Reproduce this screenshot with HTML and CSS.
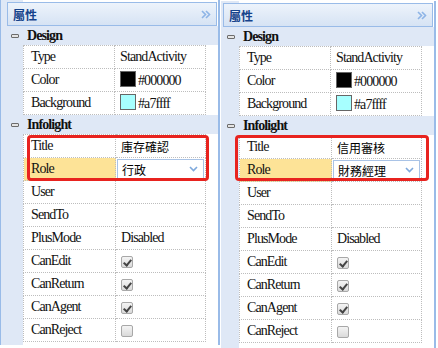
FILE: index.html
```html
<!DOCTYPE html>
<html lang="zh-Hant">
<head>
    <meta charset="UTF-8">
    <meta name="viewport" content="width=device-width, initial-scale=1.0">
    <title>屬性</title>
    <link rel="stylesheet" href="styles.css">
</head>
<body>
    <div class="wrap">
        <section class="panel">
            <div class="panel-head">
                <span class="panel-title">屬性</span>
                <svg class="collapse" width="10" height="9" viewBox="0 0 10 9"><path d="M1 1l3.5 3.5L1 8M5 1l3.5 3.5L5 8" fill="none" stroke="#8db4e6" stroke-width="1.6"/></svg>
            </div>
            <div class="group"><i class="toggle"></i>Design</div>
            <table class="props">
                <tr><td class="key">Type</td><td>StandActivity</td></tr>
                <tr><td class="key">Color</td><td><span class="swatch" style="background:#000000"></span>#000000</td></tr>
                <tr><td class="key">Background</td><td><span class="swatch" style="background:#a7ffff"></span>#a7ffff</td></tr>
            </table>
            <div class="group"><i class="toggle"></i>Infolight</div>
            <table class="props">
                <tr><td class="key">Title</td><td class="cjk">庫存確認</td></tr>
                <tr class="selected"><td class="key">Role</td><td><div class="combo"><span class="cjk">行政</span><svg width="9" height="6" viewBox="0 0 9 6"><path d="M1 1l3.5 3.5L8 1" fill="none" stroke="#7fa9dc" stroke-width="1.6"/></svg></div></td></tr>
                <tr><td class="key">User</td><td></td></tr>
                <tr><td class="key">SendTo</td><td></td></tr>
                <tr><td class="key">PlusMode</td><td>Disabled</td></tr>
                <tr><td class="key">CanEdit</td><td><span class="check on"></span></td></tr>
                <tr><td class="key">CanReturn</td><td><span class="check on"></span></td></tr>
                <tr><td class="key">CanAgent</td><td><span class="check on"></span></td></tr>
                <tr><td class="key">CanReject</td><td><span class="check"></span></td></tr>
            </table>
            <div class="mark"></div>
        </section>

        <section class="panel panel-right">
            <div class="panel-head">
                <span class="panel-title">屬性</span>
                <svg class="collapse" width="10" height="9" viewBox="0 0 10 9"><path d="M1 1l3.5 3.5L1 8M5 1l3.5 3.5L5 8" fill="none" stroke="#8db4e6" stroke-width="1.6"/></svg>
            </div>
            <div class="group"><i class="toggle"></i>Design</div>
            <table class="props">
                <tr><td class="key">Type</td><td>StandActivity</td></tr>
                <tr><td class="key">Color</td><td><span class="swatch" style="background:#000000"></span>#000000</td></tr>
                <tr><td class="key">Background</td><td><span class="swatch" style="background:#a7ffff"></span>#a7ffff</td></tr>
            </table>
            <div class="group"><i class="toggle"></i>Infolight</div>
            <table class="props">
                <tr><td class="key">Title</td><td class="cjk">信用審核</td></tr>
                <tr class="selected"><td class="key">Role</td><td><div class="combo"><span class="cjk">財務經理</span><svg width="9" height="6" viewBox="0 0 9 6"><path d="M1 1l3.5 3.5L8 1" fill="none" stroke="#7fa9dc" stroke-width="1.6"/></svg></div></td></tr>
                <tr><td class="key">User</td><td></td></tr>
                <tr><td class="key">SendTo</td><td></td></tr>
                <tr><td class="key">PlusMode</td><td>Disabled</td></tr>
                <tr><td class="key">CanEdit</td><td><span class="check on"></span></td></tr>
                <tr><td class="key">CanReturn</td><td><span class="check on"></span></td></tr>
                <tr><td class="key">CanAgent</td><td><span class="check on"></span></td></tr>
                <tr><td class="key">CanReject</td><td><span class="check"></span></td></tr>
            </table>
            <div class="mark"></div>
        </section>
    </div>
</body>
</html>
```

FILE: styles.css
```css
body {
    margin: 0;
    background: #fff;
    font-family: "Liberation Serif", "Noto Sans CJK TC", serif;
    font-size: 14px;
    letter-spacing: -0.9px;
    color: #111;
}
.wrap {
    display: flex;
    align-items: flex-start;
}
.panel {
    position: relative;
    width: 217px;
    height: 345px;
    border-left: 1px solid #99bbe8;
    border-right: 2px solid #99bbe8;
    background: linear-gradient(to right, #dfe8f6 22px, #fff 22px);
}
.panel-right {
    width: 213px;
    height: 347px;
    margin-left: 1px;
    margin-top: 1px;
    border-left: none;
    background: linear-gradient(to right, #dfe8f6 18px, #fff 18px);
}
.panel-head {
    display: flex;
    align-items: center;
    justify-content: space-between;
    height: 22px;
    margin: 2px 1px 0 6px;
    padding: 0 5px;
    border: 1px solid #99bbe8;
    background: linear-gradient(#edf3fb, #d6e3f4);
}
.panel-right .panel-head {
    margin-left: 2px;
}
.panel-title {
    font-family: "Noto Sans CJK TC", sans-serif;
    font-size: 12px;
    font-weight: bold;
    letter-spacing: 0;
    color: #15428b;
}
.group {
    display: flex;
    align-items: center;
    height: 19px;
    font-weight: bold;
    background: #dfe8f6;
}
.toggle {
    width: 6px;
    height: 2px;
    margin: 0 8px 0 10px;
    border: 1px solid #6c6c6c;
    border-radius: 1px;
    background: #e4e4e4;
}
.panel-right .toggle {
    margin-left: 6px;
}
.props {
    width: 183px;
    margin-left: 22px;
    border-collapse: collapse;
    background: #fff;
}
.panel-right .props {
    margin-left: 18px;
}
.props td {
    height: 22px;
    padding: 0 0 0 5px;
    border: 1px dotted #bdbdbd;
    white-space: nowrap;
}
.props td.key {
    width: 83px;
    padding-left: 7px;
}
.cjk {
    font-family: "Noto Sans CJK TC", sans-serif;
    font-size: 12px;
    letter-spacing: 0;
    color: #000;
}
.selected td {
    padding: 0 1px;
}
.selected td.key {
    padding-left: 7px;
    background: #fde397;
}
.combo {
    display: flex;
    align-items: center;
    justify-content: space-between;
    height: 19px;
    padding: 0 5px 0 4px;
    border: 1px solid #a9c3e6;
    background: #fff;
}
.swatch {
    display: inline-block;
    width: 14px;
    height: 14px;
    margin-right: 2px;
    border: 1px solid #666;
    vertical-align: -2px;
}
.check {
    display: inline-block;
    position: relative;
    width: 10px;
    height: 10px;
    border: 1px solid #a8a8a8;
    border-radius: 2px;
    background: linear-gradient(#f4f4f4, #dadada);
    vertical-align: middle;
}
.check.on::after {
    content: "";
    position: absolute;
    left: 3px;
    top: 1px;
    width: 3px;
    height: 6px;
    border: solid #444;
    border-width: 0 2px 2px 0;
    transform: rotate(40deg);
}
.mark {
    position: absolute;
    left: 26px;
    top: 135px;
    width: 176px;
    height: 40px;
    border: 3px solid #e8231f;
    border-radius: 4px;
}
.panel-right .mark {
    left: 14px;
    top: 134px;
    width: 188px;
}
```
